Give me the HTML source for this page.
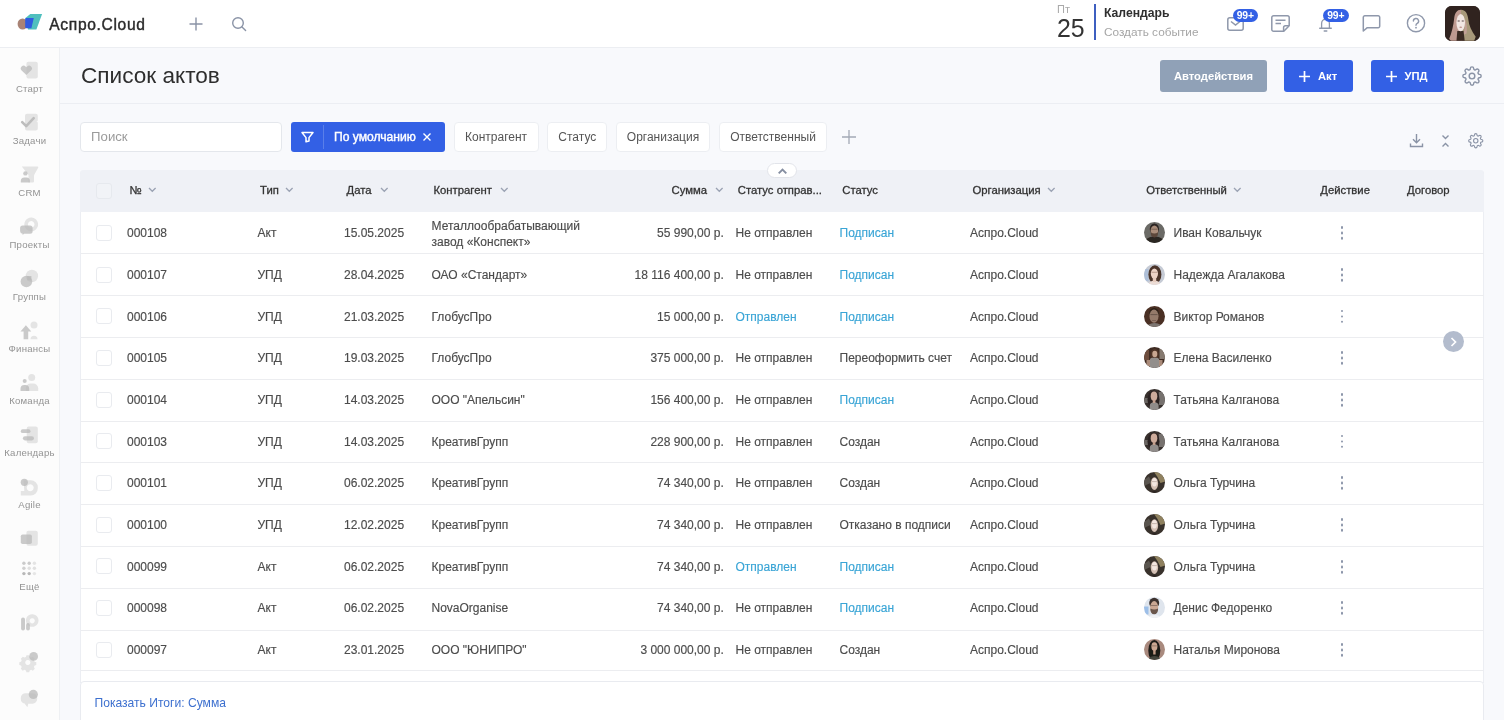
<!DOCTYPE html>
<html lang="ru">
<head>
<meta charset="utf-8">
<title>Список актов</title>
<style>
*{box-sizing:border-box;margin:0;padding:0}
html,body{width:1504px;height:720px;overflow:hidden}
body{font-family:"Liberation Sans",sans-serif;background:#f8f9fc;color:#4a4a4a;position:relative;font-size:12px}
i,u,b{font-style:normal;text-decoration:none;font-weight:normal;display:block}
#app{position:absolute;left:0;top:0;width:1504px;height:720px;overflow:hidden;will-change:transform}
.abs{position:absolute}
svg{position:absolute;overflow:visible}

/* top bar */
#top{position:absolute;left:0;top:0;width:1504px;height:48px;background:#fff;border-bottom:1px solid #eceef2}
#brand{position:absolute;left:49.3px;top:15.2px;font-size:15.6px;line-height:20px;color:#2b2b2b;-webkit-text-stroke:.4px #2b2b2b;letter-spacing:.66px;white-space:nowrap}
#cal-d{position:absolute;left:1057px;top:3.3px;font-size:11px;line-height:13px;color:#a9a9a9}
#cal-n{position:absolute;left:1057px;top:14.3px;font-size:24.9px;line-height:28px;color:#333;letter-spacing:-.2px}
#cal-bar{position:absolute;left:1094px;top:4px;width:2px;height:36px;background:#3e5fc0}
#cal-t{position:absolute;left:1104px;top:5px;font-size:12.2px;line-height:16px;color:#2f2f2f;font-weight:bold;white-space:nowrap}
#cal-s{position:absolute;left:1104px;top:25px;font-size:11.8px;line-height:15px;color:#a6a6a6;white-space:nowrap}
.badge{position:absolute;top:9px;height:13px;border-radius:7px;background:#3360e5;color:#fff;font-size:10.4px;font-weight:bold;line-height:13px;text-align:center;letter-spacing:-.2px}
#ava{position:absolute;left:1445px;top:6px;width:34.5px;height:34.7px;border-radius:6.7px;background:#2a1d18;overflow:hidden}

/* sidebar */
#side{position:absolute;left:0;top:48px;width:60px;height:672px;background:#fcfcfc;border-right:1px solid #eef0f3}
.sl{position:absolute;left:0;width:59px;text-align:center;font-size:9.6px;line-height:12px;color:#939393;letter-spacing:.22px;margin-top:.4px;white-space:nowrap}

/* title */
#title{position:absolute;left:81px;top:62px;font-size:22.6px;line-height:28px;color:#2e2e2e;white-space:nowrap}
#hr{position:absolute;left:60px;top:103px;width:1444px;height:1px;background:#eceef3}
.btn{position:absolute;top:60px;height:32px;border-radius:3px;color:#fff;font-weight:bold;font-size:11.2px;line-height:32px;white-space:nowrap}

/* filter */
#search{position:absolute;left:80.3px;top:121.7px;width:201.5px;height:30px;background:#fff;border:1px solid #e4e7ec;border-radius:4px;font-size:13.2px;line-height:28px;color:#9b9b9b;padding-left:9.8px}
#fbtn{position:absolute;left:290.5px;top:121.700px;width:154px;height:30px;background:#3360e5;border-radius:3px}
#fbtn span{position:absolute;left:43.5px;top:0;line-height:30px;color:#fff;font-size:12.1px;-webkit-text-stroke:.4px #fff;white-space:nowrap}
#fbtn u{position:absolute;left:32px;top:3px;width:1px;height:24px;background:#5a7fe9}
.chip{position:absolute;top:121.7px;height:30px;background:#fff;border:1px solid #eceef2;border-radius:4px;font-size:12px;line-height:28px;color:#555;text-align:center;white-space:nowrap}

/* table */
#tbl{position:absolute;left:80px;top:169.8px;width:1403.6px;height:513px;background:#fff;border-radius:4px 4px 0 0;border-left:1px solid #eceef3;border-right:1px solid #eceef3}
#thead{position:absolute;left:80px;top:169.8px;width:1403.6px;height:42px;background:#eff1f6;border-radius:4px 4px 0 0}
.h{position:absolute;top:183px;font-size:11.3px;line-height:15px;color:#333;white-space:nowrap;-webkit-text-stroke:.3px #333}
.row{position:absolute;left:80.5px;width:1403.3px;height:41.67px}
.ln{position:absolute;left:81px;width:1402.5px;height:1px;background:#ecedf0}
.c{position:absolute;top:14.5px;line-height:15px;font-size:12px;color:#4c4c4c;white-space:nowrap;-webkit-text-stroke:.15px #4c4c4c}
.cb{position:absolute;left:15px;top:13px;width:16px;height:16px;border:1px solid #e9ebef;border-radius:3px;background:#fff}
.c-num{left:46.5px}.c-typ{left:177px}.c-date{left:263.5px}.c-ka{left:351px}
.c-ka.two{top:6.3px;line-height:16px}
.c-sum{right:760px;text-align:right}
.c-so{left:655px}.c-st{left:759px}.c-org{left:889.5px}.c-name{left:1093px}
.lnk{color:#3aa5d6;-webkit-text-stroke-color:#3aa5d6}
.av{position:absolute;left:1063.3px;top:10.4px;width:21px;height:21px}
.dots{position:absolute;left:1260.2px;top:14.5px;width:2.8px;height:2.8px;border-radius:50%;background:#8c96aa;box-shadow:0 5.4px 0 #8c96aa,0 10.8px 0 #8c96aa}
#foot{position:absolute;left:80px;top:681.2px;width:1403.6px;height:42px;background:#fff;border:1px solid #e9ebf0;border-radius:4px 4px 0 0}
#foot span{position:absolute;left:13.5px;top:13.6px;line-height:15px;font-size:12.1px;color:#3d70cf;white-space:nowrap}
</style>
</head>
<body>
<div id="app">

<!-- ===== TOP BAR ===== -->
<div id="top">
  <svg id="logo" style="left:17px;top:13px" width="26" height="18" viewBox="0 0 26 18">
    <path d="M13.300 1h11.800l-5.700 15.600h-8.400L8.400 5z" fill="#4fbfbe"/>
    <ellipse cx="5.600" cy="11" rx="5" ry="5.500" fill="#a98375"/>
    <path d="M9.300 5h7.500l-2.400 10.200H9.200q-1 0-1-1V6q0-1 1.100-1z" fill="#2f5be0"/>
  </svg>
  <div id="brand">Аспро.Cloud</div>
  <svg style="left:189px;top:17px" width="14" height="14" viewBox="0 0 14 14"><path d="M7 .5v13M.5 7h13" stroke="#8a93a6" stroke-width="1.4" fill="none"/></svg>
  <svg style="left:231px;top:16px" width="16" height="16" viewBox="0 0 16 16"><circle cx="7" cy="7" r="5.3" stroke="#8a93a6" stroke-width="1.4" fill="none"/><path d="M11 11l3.6 3.6" stroke="#8a93a6" stroke-width="1.4" stroke-linecap="round"/></svg>

  <div id="cal-d">Пт</div>
  <div id="cal-n">25</div>
  <div id="cal-bar"></div>
  <div id="cal-t">Календарь</div>
  <div id="cal-s">Создать событие</div>

  <!-- mail -->
  <svg style="left:1227px;top:17px" width="17" height="14" viewBox="0 0 17 14"><rect x=".8" y=".8" width="15.4" height="12.4" rx="2" stroke="#8f98ab" stroke-width="1.5" fill="none"/><path d="M4 4.5l4.5 3.6L13 4.5" stroke="#8f98ab" stroke-width="1.5" fill="none"/></svg>
  <div class="badge" style="left:1233px;width:24.5px">99+</div>
  <!-- note -->
  <svg style="left:1271px;top:15px" width="19" height="17" viewBox="0 0 19 17"><path d="M2.6.8h13.8a1.8 1.8 0 0 1 1.8 1.8v8.2l-5.4 5.4H2.6a1.8 1.8 0 0 1-1.8-1.8V2.600A1.800 1.800 0 0 1 2.600.8z" stroke="#8f98ab" stroke-width="1.5" fill="none"/><path d="M18 10.800h-3.600a1.800 1.800 0 0 0-1.800 1.800v3.400" stroke="#8f98ab" stroke-width="1.5" fill="none"/><path d="M4.500 5.200h10M4.500 8.600h5.500" stroke="#8f98ab" stroke-width="1.5"/></svg>
  <!-- bell -->
  <svg style="left:1319.200px;top:17px" width="13" height="15.500" viewBox="0 0 15 17" preserveAspectRatio="none"><path d="M3 11.500V7a4.500 4.500 0 0 1 9 0v4.500M.8 12.300h13.400" stroke="#8f98ab" stroke-width="1.5" fill="none" stroke-linecap="round"/><path d="M6 15.300h3" stroke="#8f98ab" stroke-width="1.600" stroke-linecap="round"/></svg>
  <div class="badge" style="left:1322.500px;width:26.500px">99+</div>
  <!-- chat -->
  <svg style="left:1362px;top:15px" width="19" height="17" viewBox="0 0 19 17"><path d="M2.800.8h13.400a1.500 1.500 0 0 1 1.500 1.500v8.900a1.500 1.500 0 0 1-1.500 1.500H5.300L1.300 16V2.300A1.500 1.500 0 0 1 2.800.8z" stroke="#8f98ab" stroke-width="1.500" fill="none" stroke-linejoin="round"/></svg>
  <!-- help -->
  <svg style="left:1406px;top:13px" width="20" height="20" viewBox="0 0 20 20"><circle cx="10" cy="10.200" r="8.600" stroke="#8f98ab" stroke-width="1.400" fill="none"/><path d="M7.400 8.100a2.600 2.600 0 1 1 3.900 2.200c-.9.500-1.300 1-1.300 2" stroke="#8f98ab" stroke-width="1.400" fill="none" stroke-linecap="round"/><circle cx="10" cy="14.700" r=".9" fill="#8f98ab"/></svg>
  <!-- avatar -->
  <div id="ava">
    <svg style="left:0;top:0" width="34.500" height="34.700" viewBox="0 0 34.500 34.700">
      <rect width="35" height="35" fill="#30231f"/>
      <g filter="url(#bl2)">
      <path d="M16 3.800c-4.300 0-6.300 3.400-6.900 9.200-.6 6-2.300 13.500-4.900 19.800l1.500 2h11z" fill="#bf9a90"/>
      <path d="M16 3.800c4.300 0 6.700 3.800 7.300 9.600.6 6 3.300 11.800 7.400 17.300l-1.500 4H16z" fill="#a8997a"/>
      <path d="M19.500 12c1.200 5 .6 12-1.500 17l3.500-1.500c.8-5 .5-11-2-15.500z" fill="#c3a096"/>
      <path d="M12.300 25h6.200l1.200 9.700h-8.200z" fill="#3a2a24"/>
      <ellipse cx="15.700" cy="16.600" rx="4.300" ry="8.600" fill="#f2e7e3"/>
      <ellipse cx="13.700" cy="15" rx="1.300" ry=".8" fill="#5a4a48" opacity=".75"/>
      <ellipse cx="17.800" cy="15" rx="1.300" ry=".8" fill="#5a4a48" opacity=".75"/>
      <ellipse cx="15.700" cy="21.300" rx="1.400" ry=".7" fill="#b08078" opacity=".8"/>
      </g>
    </svg>
  </div>
</div>

<!-- ===== SIDEBAR ===== -->
<div id="side">
<svg style="left:0;top:0" width="60" height="672" viewBox="0 48 60 672">
<g fill="#e4e4e4">
  <!-- start -->
  <rect x="26.4" y="61.700" width="11.400" height="16.700" rx="2"/>
  <!-- tasks -->
  <path d="M27 113.800h8.800a2 2 0 0 1 2 2v4.200a1.500 1.500 0 0 1-1.500 1.500 1.500 1.500 0 0 1 1.500 1.500v5.500a2 2 0 0 1-2 2H27a2 2 0 0 1-2-2v-12.700a2 2 0 0 1 2-2z"/>
  <!-- crm funnel -->
  <path d="M21.800 166.400h15.400q1.500 0 1 1.400l-3.700 6.400q-.5 1-.5 2v5.200q0 1-1 1h-4.500v-7.400z"/>
  <!-- projects ring -->
  <path fill-rule="evenodd" d="M31.200 217.500a6.900 6.900 0 1 0 .001 0zM31.200 221a3.300 3.300 0 1 1-.001 0z"/>
  <!-- groups -->
  <circle cx="31.900" cy="276" r="6.200"/>
  <!-- finance -->
  <circle cx="34" cy="325" r="3.500"/>
  <path d="M30.500 339.200a3.500 3.500 0 0 1 7 0z"/>
  <!-- team big -->
  <circle cx="31.700" cy="377.600" r="3.500"/>
  <path d="M25.700 391v-2.500a5 5 0 0 1 5-5h2.500a5 5 0 0 1 5 5v2.500z"/>
  <!-- calendar -->
  <rect x="26.700" y="426.500" width="11.100" height="16.700" rx="2"/>
  <!-- agile -->
  <path fill-rule="evenodd" d="M23.500 480.200h7.300a7 7 0 0 1 7 7v1.300a7 7 0 0 1-7 7H20.800v-4.500h3.500zM30.200 484.300a3.500 3.500 0 1 0 .001 0z"/>
  <!-- stack -->
  <rect x="26.400" y="530.800" width="11.400" height="15" rx="2"/>
  <!-- P ring -->
  <path fill-rule="evenodd" d="M32.200 614.200a6.300 6.300 0 1 0 .001 0zM32.200 618.200a2.600 2.600 0 1 1-.001 0z"/>
  <!-- gear -->
  <path fill-rule="evenodd" d="M26.400 655.200h2.800l.5 1.700 1.500.7 1.600-.9 2 2-.9 1.600.7 1.500 1.700.5v2.800l-1.700.5-.7 1.500.9 1.600-2 2-1.600-.9-1.500.7-.5 1.700h-2.800l-.5-1.700-1.500-.7-1.600.9-2-2 .9-1.600-.7-1.500-1.700-.5v-2.800l1.700-.5.7-1.500-.9-1.600 2-2 1.600.9 1.500-.7zM27.800 659.900a2.600 2.600 0 1 0 .001 0z"/>
  <!-- chat bubble -->
  <path d="M25.500 693.200h7a4.700 4.700 0 0 1 4.700 4.700v1.100a4.700 4.700 0 0 1-4.700 4.700h-4.200l-.9 3.500-2.800-3.600a4.700 4.700 0 0 1-3.800-4.600v-1.100a4.700 4.700 0 0 1 4.700-4.700z"/>
</g>
<g fill="#b9b9b9" fill-opacity=".74">
  <!-- heart -->
  <path d="M26.350 75l-4.700-4.600a2.700 2.700 0 0 1 0-3.900 2.800 2.800 0 0 1 3.900 0l.8.800.8-.8a2.800 2.800 0 0 1 3.900 0 2.700 2.700 0 0 1 0 3.900z"/>
  <!-- crm person -->
  <circle cx="25.400" cy="173.400" r="2.200"/>
  <path d="M20.800 182.400v-1.400a3.500 3.500 0 0 1 3.500-3.500h2.100a3.500 3.500 0 0 1 3.500 3.500v1.400z"/>
  <!-- projects bubble -->
  <path d="M22.600 225.400h7.500a2.500 2.500 0 0 1 2.500 2.500v3.400a2.500 2.500 0 0 1-2.500 2.500h-6l-1.500 1.200v-1.300a2.500 2.500 0 0 1-2.500-2.400v-3.400a2.500 2.500 0 0 1 2.500-2.500z"/>
  <!-- groups dark -->
  <circle cx="26.400" cy="281.500" r="5.800"/>
  <rect x="27.200" y="276" width="4.200" height="4.200"/>
  <!-- finance arrow -->
  <path d="M25.900 325.300l5.400 6.200h-3.100v7.700h-4.600v-7.700h-3.100z"/>
  <!-- team small -->
  <circle cx="24.700" cy="381" r="2"/>
  <path d="M20.500 391v-2.200a3.800 3.800 0 0 1 3.800-3.800h1.100a3.800 3.800 0 0 1 3.800 3.800v2.200z"/>
  <!-- calendar pills -->
  <rect x="20.800" y="429.300" width="9.700" height="3.800" rx="1.900"/>
  <rect x="22.900" y="436.200" width="11.100" height="4.200" rx="2.100"/>
  <!-- agile dot -->
  <circle cx="24.300" cy="482.300" r="3.600"/>
  <!-- stack dark -->
  <rect x="20.800" y="534.400" width="11.100" height="9.600" rx="1.800"/>
  <!-- P bars -->
  <rect x="21.100" y="617.400" width="3.900" height="13.100" rx="1.900"/>
  <rect x="26.100" y="623" width="3.800" height="7.500" rx="1.900"/>
  <!-- gear dot -->
  <circle cx="33.600" cy="656.400" r="4.400"/>
  <!-- chat dot -->
  <circle cx="33.300" cy="694.400" r="4.600"/>
</g>
<!-- tasks check -->
<path d="M22.200 122.200l4 4 7.500-8" fill="none" stroke="#bdbdbd" stroke-width="2.600" stroke-linecap="round" stroke-linejoin="round"/>
<!-- more dots -->
<g>
<circle cx="23.900" cy="563.200" r="1.700" fill="#cbcbcb"/><circle cx="29.200" cy="563.200" r="1.700" fill="#cbcbcb"/><circle cx="34.400" cy="563.200" r="1.700" fill="#e4e4e4"/>
<circle cx="23.900" cy="568.300" r="1.700" fill="#d0d0d0"/><circle cx="29.200" cy="568.300" r="1.700" fill="#e0e0e0"/><circle cx="34.400" cy="568.300" r="1.700" fill="#e0e0e0"/>
<circle cx="23.900" cy="573.600" r="1.700" fill="#b8b8b8"/><circle cx="29.200" cy="573.600" r="1.700" fill="#b8b8b8"/><circle cx="34.400" cy="573.600" r="1.700" fill="#e6e6e6"/>
</g>
</svg>
<div class="sl" style="top:35px">Старт</div>
<div class="sl" style="top:87px">Задачи</div>
<div class="sl" style="top:139px">CRM</div>
<div class="sl" style="top:191px">Проекты</div>
<div class="sl" style="top:243px">Группы</div>
<div class="sl" style="top:295px">Финансы</div>
<div class="sl" style="top:347px">Команда</div>
<div class="sl" style="top:399px">Календарь</div>
<div class="sl" style="top:451px">Agile</div>
<div class="sl" style="top:533px">Ещё</div>

</div>

<!-- ===== TITLE ===== -->
<div id="title">Список актов</div>
<div id="hr"></div>
<div class="btn" style="left:1160px;width:107px;background:#90a1b7;text-align:center">Автодействия</div>
<div class="btn" style="left:1284px;width:69px;background:#3360e5"><svg style="left:15px;top:11px" width="11" height="11" viewBox="0 0 11 11"><path d="M5.500 0v11M0 5.500h11" stroke="#fff" stroke-width="1.700"/></svg><span style="position:absolute;left:34px">Акт</span></div>
<div class="btn" style="left:1370.500px;width:73.500px;background:#3360e5"><svg style="left:15px;top:11px" width="11" height="11" viewBox="0 0 11 11"><path d="M5.500 0v11M0 5.500h11" stroke="#fff" stroke-width="1.700"/></svg><span style="position:absolute;left:34px">УПД</span></div>
<svg id="gear1" style="left:1462px;top:66px" width="20" height="20" viewBox="0 0 24 24"><use href="#gearp"/></svg>

<svg width="0" height="0" style="left:-10px;top:-10px"><defs>
<g id="gearp" fill="none" stroke="#8a93a6" stroke-width="1.700" stroke-linejoin="round"><circle cx="12" cy="12" r="3.400"/><path d="M19.400 15a1.650 1.650 0 0 0 .33 1.820l.06.06a2 2 0 1 1-2.830 2.830l-.06-.06a1.650 1.650 0 0 0-1.820-.33 1.650 1.650 0 0 0-1 1.510V21a2 2 0 1 1-4 0v-.09A1.650 1.650 0 0 0 9 19.400a1.650 1.650 0 0 0-1.820.33l-.06.06a2 2 0 1 1-2.830-2.830l.06-.06a1.650 1.650 0 0 0 .33-1.820 1.650 1.650 0 0 0-1.510-1H3a2 2 0 1 1 0-4h.09A1.650 1.650 0 0 0 4.600 9a1.650 1.650 0 0 0-.33-1.820l-.06-.06a2 2 0 1 1 2.830-2.830l.06.06a1.650 1.650 0 0 0 1.820.33H9a1.650 1.650 0 0 0 1-1.510V3a2 2 0 1 1 4 0v.09a1.650 1.650 0 0 0 1 1.510 1.650 1.650 0 0 0 1.820-.33l.06-.06a2 2 0 1 1 2.830 2.830l-.06.06a1.650 1.650 0 0 0-.33 1.820V9a1.650 1.650 0 0 0 1.510 1H21a2 2 0 1 1 0 4h-.09a1.650 1.650 0 0 0-1.510 1z"/></g>
<filter id="bl2" x="-10%" y="-10%" width="120%" height="120%"><feGaussianBlur stdDeviation=".6"/></filter>
<path id="chev" d="M0 0l3.300 3.300L6.600 0" fill="none" stroke="#9aa2b2" stroke-width="1.300"/>
</defs></svg>

<!-- ===== FILTER ROW ===== -->
<div id="search">Поиск</div>
<div id="fbtn">
  <svg style="left:10px;top:9px" width="13" height="13" viewBox="0 0 13 13"><path d="M1 1.500h11L8 6.600v3.400l-3 .8V6.600z" stroke="#fff" stroke-width="1.500" fill="none" stroke-linejoin="round"/></svg>
  <u></u><span>По умолчанию</span>
  <svg style="left:132px;top:11px" width="8" height="8" viewBox="0 0 8 8"><path d="M.5.500l7 7M7.500.500l-7 7" stroke="#fff" stroke-width="1.400"/></svg>
</div>
<div class="chip" style="left:453.500px;width:85.200px">Контрагент</div>
<div class="chip" style="left:547.300px;width:60px">Статус</div>
<div class="chip" style="left:616px;width:94px">Организация</div>
<div class="chip" style="left:719px;width:108px">Ответственный</div>
<svg style="left:842px;top:130px" width="14" height="14" viewBox="0 0 14 14"><path d="M7 0v14M0 7h14" stroke="#a3a9b5" stroke-width="1.300"/></svg>

<!-- right tools -->
<svg style="left:1409px;top:133px" width="15" height="15" viewBox="0 0 15 15"><path d="M7.500 1v8.500M4 6.300l3.500 3.500L11 6.300M1.500 10.500v3h12v-3" stroke="#8a93a6" stroke-width="1.400" fill="none"/></svg>
<svg style="left:1441px;top:133px" width="9" height="15" viewBox="0 0 9 15"><path d="M1.500 2.600l3 3 3-3M1.500 13.600l3-3 3 3" stroke="#8a93a6" stroke-width="1.400" fill="none"/></svg>
<svg style="left:1467.500px;top:132.500px" width="15.500" height="15.500" viewBox="0 0 24 24"><use href="#gearp"/></svg>

<svg width="0" height="0" style="left:-20px;top:-20px"><defs>
<clipPath id="cc"><circle cx="10.5" cy="10.5" r="10.5"/></clipPath>
<filter id="bl" x="-10%" y="-10%" width="120%" height="120%"><feGaussianBlur stdDeviation=".55"/></filter>
<g id="a1" clip-path="url(#cc)"><rect width="21" height="21" fill="#6b6a66"/><g filter="url(#bl)">
  <ellipse cx="10.500" cy="22" rx="11" ry="7.500" fill="#2c2521"/>
  <ellipse cx="10.400" cy="7" rx="4.600" ry="5.600" fill="#2a2420"/>
  <ellipse cx="10.400" cy="8.800" rx="3.800" ry="5.400" fill="#a98c7a"/>
  <path d="M6.700 10.200q3.700 2.400 7.400 0 0 5.200-3.700 5.200T6.700 10.200z" fill="#5b463b"/>
  <path d="M7.300 6.700h6.200v1h-6.200z" fill="#6b5548" opacity=".7"/></g></g>
<g id="a2" clip-path="url(#cc)"><rect width="21" height="21" fill="#c6cbd5"/><g filter="url(#bl)">
  <rect x="0" y="5" width="4.500" height="12" fill="#aebfd8"/>
  <ellipse cx="10.900" cy="10.500" rx="6.500" ry="9.300" fill="#4b342c"/>
  <ellipse cx="10.500" cy="22" rx="6.500" ry="5.500" fill="#ecdcd5"/>
  <ellipse cx="10.400" cy="9.600" rx="3.600" ry="5.200" fill="#ecd3c6"/>
  <rect x="8.800" y="13.500" width="3.400" height="4.500" fill="#e6cbbd"/>
  <path d="M7.500 7.800h5.800v.9H7.500z" fill="#8a6a5c" opacity=".6"/></g></g>
<g id="a3" clip-path="url(#cc)"><rect width="21" height="21" fill="#4a3024"/><g filter="url(#bl)">
  <ellipse cx="10.500" cy="23" rx="8.500" ry="6" fill="#7b7571"/>
  <ellipse cx="10" cy="7" rx="4.800" ry="5" fill="#2d2019"/>
  <ellipse cx="10" cy="10.200" rx="4.500" ry="6.600" fill="#957a6b"/>
  <path d="M6.400 8h7.200v1.100H6.400z" fill="#5c4a40" opacity=".7"/>
  <path d="M8 14h4v.900H8z" fill="#6b5247" opacity=".7"/></g></g>
<g id="a4" clip-path="url(#cc)"><rect width="21" height="21" fill="#3e2b22"/><g filter="url(#bl)">
  <rect x="0" y="3" width="5" height="10" fill="#6e4d3c"/><rect x="15.500" y="2" width="6" height="10" fill="#867a70"/>
  <ellipse cx="10.700" cy="7.500" rx="4.200" ry="5.800" fill="#4f3528"/>
  <rect x="5.800" y="10.800" width="9.400" height="11" rx="2.500" fill="#928e8b"/>
  <ellipse cx="10.800" cy="7" rx="2.500" ry="3.300" fill="#c9a791"/>
  <rect x="2.500" y="13" width="3.500" height="6" fill="#c4a38f" opacity=".8"/><rect x="15" y="13" width="3.500" height="6" fill="#c4a38f" opacity=".8"/></g></g>
<g id="a5" clip-path="url(#cc)"><rect width="21" height="21" fill="#37302d"/><g filter="url(#bl)">
  <rect x="14.800" y="3" width="7" height="13" fill="#76716e"/>
  <rect x="0" y="9" width="4" height="5" fill="#6a6562"/>
  <ellipse cx="9.500" cy="10.500" rx="6" ry="9" fill="#2a2220"/>
  <path d="M5.800 21v-4.200q0-3.500 4.400-3.500t4.400 3.500V21z" fill="#908c8a"/>
  <ellipse cx="10" cy="7.200" rx="3.300" ry="4.600" fill="#cdab9b"/>
  <rect x="8.800" y="11" width="2.600" height="3" fill="#c29e8d"/></g></g>
<g id="a6" clip-path="url(#cc)"><rect width="21" height="21" fill="#39322c"/><g filter="url(#bl)">
  <path d="M10 0h11v9.500l-4.500 1.500-3-6z" fill="#8f815e"/>
  <path d="M0 8l5-3.500 2.500 6L0 14z" fill="#5a554f"/>
  <ellipse cx="10.400" cy="11.600" rx="3.700" ry="6.300" fill="#d4c0b4"/>
  <ellipse cx="10.400" cy="10.300" rx="2.500" ry="4.200" fill="#f3e6e0"/>
  <path d="M8 9.200h4.800v.9H8z" fill="#a08a80" opacity=".6"/>
  <ellipse cx="10.500" cy="22" rx="5" ry="3" fill="#2d2724"/></g></g>
<g id="a7" clip-path="url(#cc)"><rect width="21" height="21" fill="#dfe5ed"/><g filter="url(#bl)">
  <rect x="0" y="9.500" width="4.500" height="8" fill="#9dbfe8"/>
  <ellipse cx="10.500" cy="24" rx="9" ry="6" fill="#f0f2f5"/>
  <ellipse cx="10.200" cy="6" rx="5" ry="5.300" fill="#3c332e"/>
  <ellipse cx="10.200" cy="10.300" rx="4" ry="6.200" fill="#cba893"/>
  <path d="M6.300 11.500q3.900 2 7.800 0 0 5.800-3.900 5.800T6.300 11.500z" fill="#6a574c"/>
  <path d="M7 8h6.400v1H7z" fill="#6a5549" opacity=".6"/></g></g>
<g id="a8" clip-path="url(#cc)"><rect width="21" height="21" fill="#a98a7e"/><g filter="url(#bl)">
  <ellipse cx="10.300" cy="11.500" rx="6" ry="10.500" fill="#1f1a19"/>
  <ellipse cx="10.500" cy="23" rx="7.500" ry="6" fill="#45453c"/>
  <ellipse cx="10.400" cy="7.600" rx="3" ry="4.300" fill="#cba691"/>
  <rect x="9.200" y="11" width="2.400" height="4.500" fill="#c29c87"/>
  <path d="M8 6.500h4.800v.800H8z" fill="#5c463c" opacity=".6"/></g></g>
</defs></svg>

<!-- ===== TABLE ===== -->
<div id="tbl"></div>
<div id="thead"></div>
<i class="cb" style="left:96px;top:183px;background:#f1f3f7;border-color:#e6e9ee"></i>
<div class="h" style="left:129.500px">№</div><svg style="left:149.300px;top:188.300px" width="7" height="4"><use href="#chev"/></svg>
<div class="h" style="left:260px">Тип</div><svg style="left:286px;top:188px" width="7" height="4"><use href="#chev"/></svg>
<div class="h" style="left:346.500px">Дата</div><svg style="left:380.500px;top:188px" width="7" height="4"><use href="#chev"/></svg>
<div class="h" style="left:433.500px">Контрагент</div><svg style="left:500.500px;top:188px" width="7" height="4"><use href="#chev"/></svg>
<div class="h" style="left:671.500px">Сумма</div><svg style="left:715.500px;top:188px" width="7" height="4"><use href="#chev"/></svg>
<div class="h" style="left:737.800px">Статус отправ...</div>
<div class="h" style="left:842.300px">Статус</div>
<div class="h" style="left:972.500px">Организация</div><svg style="left:1047.700px;top:188px" width="7" height="4"><use href="#chev"/></svg>
<div class="h" style="left:1146.200px">Ответственный</div><svg style="left:1234.200px;top:188px" width="7" height="4"><use href="#chev"/></svg>
<div class="h" style="left:1320.300px">Действие</div>
<div class="h" style="left:1407px">Договор</div>

<!-- collapse pill -->
<div class="abs" style="left:766.500px;top:163px;width:30.800px;height:14.600px;border-radius:8px;background:#fff;border:1px solid #e2e4ea"></div>
<svg style="left:777.500px;top:167.500px" width="9" height="6" viewBox="0 0 9 6"><path d="M.7 5.400L4.500 1.600 8.300 5.400" stroke="#858ea1" stroke-width="1.900" fill="none"/></svg>

<div class="row" style="top:211.85px">
<i class="cb"></i>
<span class="c c-num">000108</span><span class="c c-typ">Акт</span><span class="c c-date">15.05.2025</span>
<span class="c c-ka two">Металлообрабатывающий<br>завод «Конспект»</span><span class="c c-sum">55 990,00 р.</span>
<span class="c c-so">Не отправлен</span><span class="c c-st lnk">Подписан</span>
<span class="c c-org">Аспро.Cloud</span><svg class="av" width="21" height="21" viewBox="0 0 21 21"><use href="#a1"/></svg><span class="c c-name">Иван Ковальчук</span>
<i class="dots"></i>
</div>
<div class="row" style="top:253.52px">
<i class="cb"></i>
<span class="c c-num">000107</span><span class="c c-typ">УПД</span><span class="c c-date">28.04.2025</span>
<span class="c c-ka">ОАО «Стандарт»</span><span class="c c-sum">18 116 400,00 р.</span>
<span class="c c-so">Не отправлен</span><span class="c c-st lnk">Подписан</span>
<span class="c c-org">Аспро.Cloud</span><svg class="av" width="21" height="21" viewBox="0 0 21 21"><use href="#a2"/></svg><span class="c c-name">Надежда Агалакова</span>
<i class="dots"></i>
</div>
<div class="row" style="top:295.19px">
<i class="cb"></i>
<span class="c c-num">000106</span><span class="c c-typ">УПД</span><span class="c c-date">21.03.2025</span>
<span class="c c-ka">ГлобусПро</span><span class="c c-sum">15 000,00 р.</span>
<span class="c c-so lnk">Отправлен</span><span class="c c-st lnk">Подписан</span>
<span class="c c-org">Аспро.Cloud</span><svg class="av" width="21" height="21" viewBox="0 0 21 21"><use href="#a3"/></svg><span class="c c-name">Виктор Романов</span>
<i class="dots"></i>
</div>
<div class="row" style="top:336.86px">
<i class="cb"></i>
<span class="c c-num">000105</span><span class="c c-typ">УПД</span><span class="c c-date">19.03.2025</span>
<span class="c c-ka">ГлобусПро</span><span class="c c-sum">375 000,00 р.</span>
<span class="c c-so">Не отправлен</span><span class="c c-st">Переоформить счет</span>
<span class="c c-org">Аспро.Cloud</span><svg class="av" width="21" height="21" viewBox="0 0 21 21"><use href="#a4"/></svg><span class="c c-name">Елена Василенко</span>
<i class="dots"></i>
</div>
<div class="row" style="top:378.53px">
<i class="cb"></i>
<span class="c c-num">000104</span><span class="c c-typ">УПД</span><span class="c c-date">14.03.2025</span>
<span class="c c-ka">ООО "Апельсин"</span><span class="c c-sum">156 400,00 р.</span>
<span class="c c-so">Не отправлен</span><span class="c c-st lnk">Подписан</span>
<span class="c c-org">Аспро.Cloud</span><svg class="av" width="21" height="21" viewBox="0 0 21 21"><use href="#a5"/></svg><span class="c c-name">Татьяна Калганова</span>
<i class="dots"></i>
</div>
<div class="row" style="top:420.20px">
<i class="cb"></i>
<span class="c c-num">000103</span><span class="c c-typ">УПД</span><span class="c c-date">14.03.2025</span>
<span class="c c-ka">КреативГрупп</span><span class="c c-sum">228 900,00 р.</span>
<span class="c c-so">Не отправлен</span><span class="c c-st">Создан</span>
<span class="c c-org">Аспро.Cloud</span><svg class="av" width="21" height="21" viewBox="0 0 21 21"><use href="#a5"/></svg><span class="c c-name">Татьяна Калганова</span>
<i class="dots"></i>
</div>
<div class="row" style="top:461.87px">
<i class="cb"></i>
<span class="c c-num">000101</span><span class="c c-typ">УПД</span><span class="c c-date">06.02.2025</span>
<span class="c c-ka">КреативГрупп</span><span class="c c-sum">74 340,00 р.</span>
<span class="c c-so">Не отправлен</span><span class="c c-st">Создан</span>
<span class="c c-org">Аспро.Cloud</span><svg class="av" width="21" height="21" viewBox="0 0 21 21"><use href="#a6"/></svg><span class="c c-name">Ольга Турчина</span>
<i class="dots"></i>
</div>
<div class="row" style="top:503.54px">
<i class="cb"></i>
<span class="c c-num">000100</span><span class="c c-typ">УПД</span><span class="c c-date">12.02.2025</span>
<span class="c c-ka">КреативГрупп</span><span class="c c-sum">74 340,00 р.</span>
<span class="c c-so">Не отправлен</span><span class="c c-st">Отказано в подписи</span>
<span class="c c-org">Аспро.Cloud</span><svg class="av" width="21" height="21" viewBox="0 0 21 21"><use href="#a6"/></svg><span class="c c-name">Ольга Турчина</span>
<i class="dots"></i>
</div>
<div class="row" style="top:545.21px">
<i class="cb"></i>
<span class="c c-num">000099</span><span class="c c-typ">Акт</span><span class="c c-date">06.02.2025</span>
<span class="c c-ka">КреативГрупп</span><span class="c c-sum">74 340,00 р.</span>
<span class="c c-so lnk">Отправлен</span><span class="c c-st lnk">Подписан</span>
<span class="c c-org">Аспро.Cloud</span><svg class="av" width="21" height="21" viewBox="0 0 21 21"><use href="#a6"/></svg><span class="c c-name">Ольга Турчина</span>
<i class="dots"></i>
</div>
<div class="row" style="top:586.88px">
<i class="cb"></i>
<span class="c c-num">000098</span><span class="c c-typ">Акт</span><span class="c c-date">06.02.2025</span>
<span class="c c-ka">NovaOrganise</span><span class="c c-sum">74 340,00 р.</span>
<span class="c c-so">Не отправлен</span><span class="c c-st lnk">Подписан</span>
<span class="c c-org">Аспро.Cloud</span><svg class="av" width="21" height="21" viewBox="0 0 21 21"><use href="#a7"/></svg><span class="c c-name">Денис Федоренко</span>
<i class="dots"></i>
</div>
<div class="row" style="top:628.55px">
<i class="cb"></i>
<span class="c c-num">000097</span><span class="c c-typ">Акт</span><span class="c c-date">23.01.2025</span>
<span class="c c-ka">ООО "ЮНИПРО"</span><span class="c c-sum">3 000 000,00 р.</span>
<span class="c c-so">Не отправлен</span><span class="c c-st">Создан</span>
<span class="c c-org">Аспро.Cloud</span><svg class="av" width="21" height="21" viewBox="0 0 21 21"><use href="#a8"/></svg><span class="c c-name">Наталья Миронова</span>
<i class="dots"></i>
</div>
<div class="ln" style="top:253.0px"></div>
<div class="ln" style="top:295.0px"></div>
<div class="ln" style="top:337.0px"></div>
<div class="ln" style="top:379.0px"></div>
<div class="ln" style="top:420.5px"></div>
<div class="ln" style="top:462.0px"></div>
<div class="ln" style="top:503.5px"></div>
<div class="ln" style="top:545.5px"></div>
<div class="ln" style="top:587.5px"></div>
<div class="ln" style="top:629.5px"></div>
<div class="ln" style="top:670.0px"></div>

<!-- scroll-right button -->
<div class="abs" style="left:1442.700px;top:331.200px;width:21px;height:21px;border-radius:50%;background:#b3bccd"></div>
<svg style="left:1450.200px;top:336.600px" width="7" height="10" viewBox="0 0 7 10"><path d="M1.500 1l4 4-4 4" stroke="#fff" stroke-width="1.700" fill="none"/></svg>

<div id="foot"><span>Показать Итоги: Сумма</span></div>

</div>
</body>
</html>
